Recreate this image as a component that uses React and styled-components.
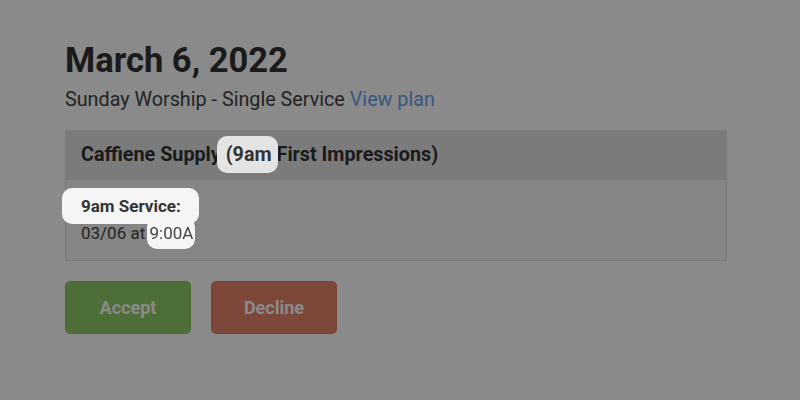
import React from "react";
import styled, { createGlobalStyle } from "styled-components";

const GlobalStyle = createGlobalStyle`
  html, body {
    margin: 0;
    padding: 0;
    background: #fff;
  }
  body {
    font-family: Roboto, "Liberation Sans", Arial, sans-serif;
    color: #333;
  }
`;

const Page = styled.main`
  padding: 40px 73px 0 65px;
`;

const Title = styled.h1`
  margin: 0;
  font-size: 34.5px;
  line-height: 40px;
  font-weight: 700;
  color: #333;
`;

const Subtitle = styled.p`
  margin: 8px 0 0;
  font-size: 19.75px;
  line-height: 24px;
  color: #444;

  a {
    color: #6aa3ec;
    text-decoration: none;
  }
`;

const Card = styled.section`
  margin-top: 18px;
  border: 1px solid #e2e2e2;
  border-radius: 2px;
  background: #f5f5f5;
`;

const CardHeader = styled.h2`
  margin: 0;
  padding: 11px 15px;
  font-size: 19.75px;
  line-height: 26px;
  font-weight: 700;
  background: #e4e4e4;
  border-bottom: 1px solid #e0e0e0;
  color: #333;
`;

const CardBody = styled.div`
  padding: 14px 15px 15px;
  font-size: 17px;
  line-height: 24px;
`;

const SlotName = styled.div`
  font-weight: 700;
`;

const SlotTime = styled.div`
  margin-top: 3px;
  color: #444;
`;

const Actions = styled.div`
  display: flex;
  gap: 20px;
  margin-top: 20px;
`;

const Button = styled.button`
  width: 126px;
  height: 53px;
  border-radius: 5px;
  border: 1px solid ${(p) => (p.$tone === "accept" ? "#88c25e" : "#de7a61")};
  background: ${(p) => (p.$tone === "accept" ? "#91cb66" : "#e8836a")};
  color: #fff;
  font-family: Roboto, "Liberation Sans", Arial, sans-serif;
  font-size: 18px;
  font-weight: 700;
  cursor: pointer;
`;

const Overlay = styled.div`
  position: fixed;
  inset: 0;
  background: rgba(0, 0, 0, 0.46);
  z-index: 1;
`;

const Spot = styled.span`
  position: relative;
  z-index: 2;
  background: ${(p) => p.$bg || "#f5f5f5"};
  border-radius: 10px;
  padding: ${(p) => p.$py}px ${(p) => p.$pr}px ${(p) => p.$py}px ${(p) => p.$pl}px;
  margin: 0 ${(p) => -p.$pr}px 0 ${(p) => -p.$pl}px;
`;

export default function App() {
  return (
    <>
      <GlobalStyle />
      <Page>
        <Title>March 6, 2022</Title>
        <Subtitle>
          Sunday Worship - Single Service <a href="#">View plan</a>
        </Subtitle>
        <Card>
          <CardHeader>
            Caffiene Supply{" "}
            <Spot $bg="#e4e4e4" $py={7} $pl={9} $pr={6}>
              (9am
            </Spot>{" "}
            First Impressions)
          </CardHeader>
          <CardBody>
            <SlotName>
              <Spot $py={8} $pl={19} $pr={18}>
                9am Service:
              </Spot>
            </SlotName>
            <SlotTime>
              03/06 at{" "}
              <Spot $py={6} $pl={2} $pr={2}>
                9:00A
              </Spot>
            </SlotTime>
          </CardBody>
        </Card>
        <Actions>
          <Button $tone="accept">Accept</Button>
          <Button $tone="decline">Decline</Button>
        </Actions>
      </Page>
      <Overlay />
    </>
  );
}
